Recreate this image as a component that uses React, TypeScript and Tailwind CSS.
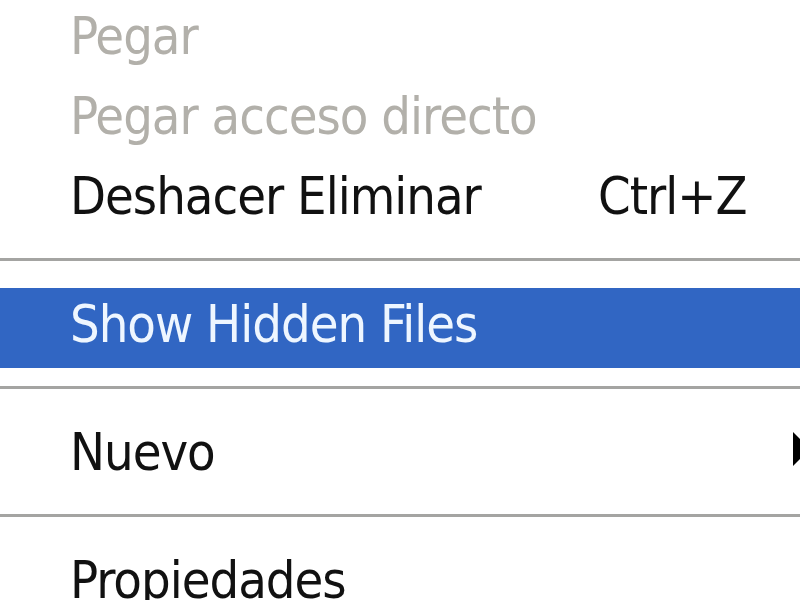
import React from "react";

type Item =
  | { kind: "item"; label: string; shortcut?: string; disabled?: boolean; active?: boolean; submenu?: boolean }
  | { kind: "sep" };

const items: Item[] = [
  { kind: "item", label: "Pegar", disabled: true },
  { kind: "item", label: "Pegar acceso directo", disabled: true },
  { kind: "item", label: "Deshacer Eliminar", shortcut: "Ctrl+Z" },
  { kind: "sep" },
  { kind: "item", label: "Show Hidden Files", active: true },
  { kind: "sep" },
  { kind: "item", label: "Nuevo", submenu: true },
  { kind: "sep" },
  { kind: "item", label: "Propiedades" },
];

const MenuRow = ({ item }: { item: Extract<Item, { kind: "item" }> }) => {
  const color = item.active ? "text-[#eef6ff]" : item.disabled ? "text-[#b2b0aa]" : "text-[#111111]";
  return (
    <div
      className={`flex h-[80px] shrink-0 items-center pl-[70px] ${item.active ? "bg-[#3166c3]" : ""} ${color}`}
    >
      <span className="w-[528px] shrink-0 whitespace-nowrap pb-[8px]">{item.label}</span>
      {item.shortcut && <span className="whitespace-nowrap pb-[8px]">{item.shortcut}</span>}
      {item.submenu && (
        <span className="ml-auto mr-[10px] mb-[14px] h-0 w-0 border-y-[17px] border-l-[17px] border-y-transparent border-l-black" />
      )}
    </div>
  );
};

const Separator = () => (
  <div className="h-[48px] shrink-0 pt-[18px]">
    <div className="h-[3px] bg-[#a4a4a2]" />
  </div>
);

export default function App() {
  return (
    <div className="h-[600px] w-[800px] overflow-hidden bg-white">
      <div className="flex w-[820px] flex-col font-['DejaVu_Sans_Condensed','DejaVu_Sans',sans-serif] text-[52px] leading-none tracking-[-1px]">
        {items.map((it, i) => (it.kind === "sep" ? <Separator key={i} /> : <MenuRow key={i} item={it} />))}
      </div>
    </div>
  );
}
